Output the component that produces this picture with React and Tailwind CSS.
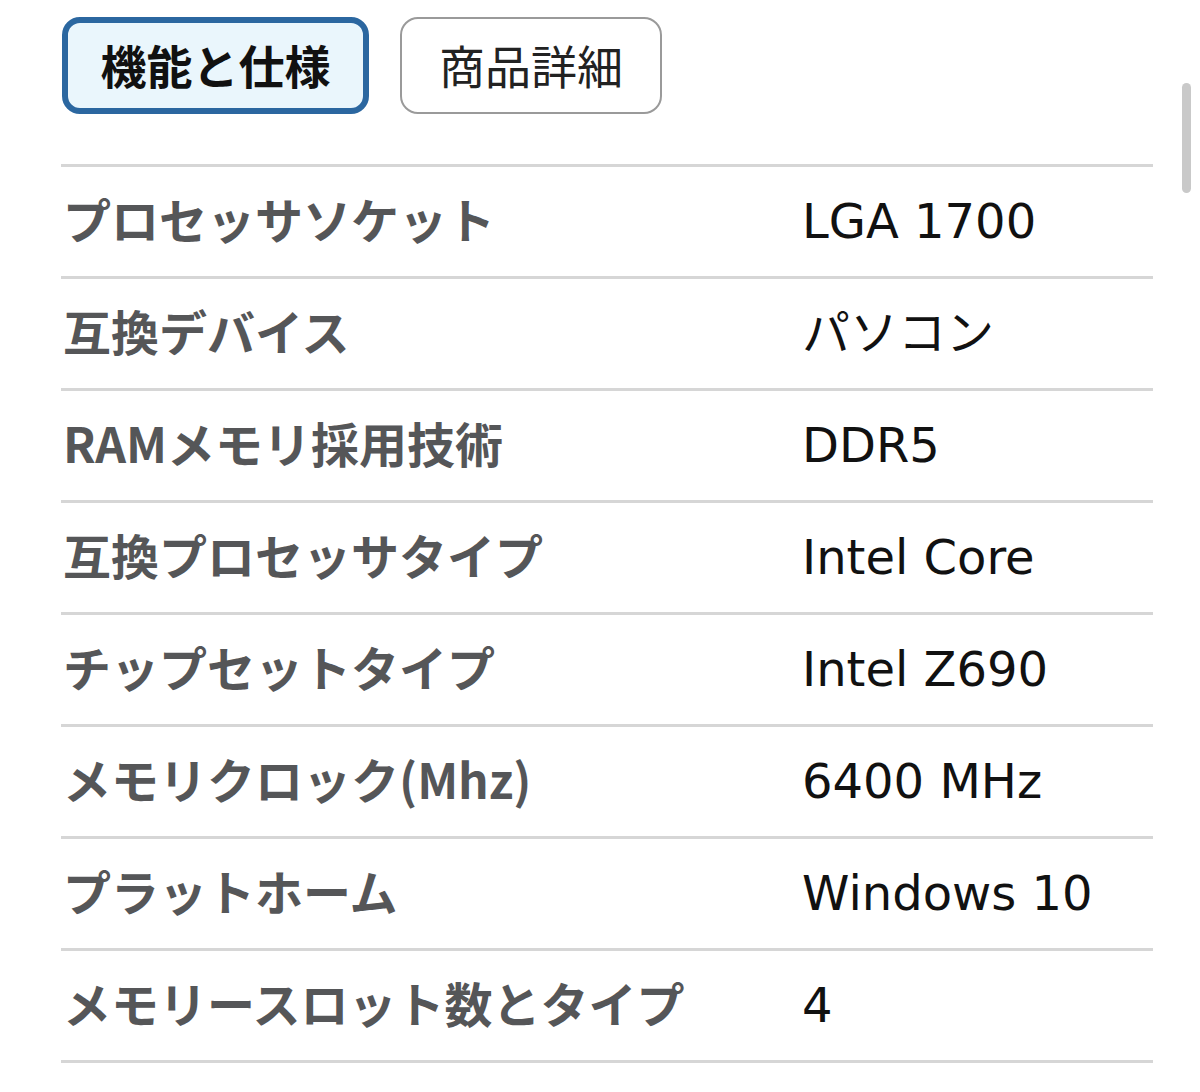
import { useState } from "react";

const specs = [
  ["プロセッサソケット", "LGA 1700"],
  ["互換デバイス", "パソコン"],
  ["RAMメモリ採用技術", "DDR5"],
  ["互換プロセッサタイプ", "Intel Core"],
  ["チップセットタイプ", "Intel Z690"],
  ["メモリクロック(Mhz)", "6400 MHz"],
  ["プラットホーム", "Windows 10"],
  ["メモリースロット数とタイプ", "4"],
];

const App = () => {
  const [tab, setTab] = useState("spec");

  return (
    <div className="relative w-[1200px] h-[1092px] bg-white overflow-hidden font-['Noto_Sans_CJK_JP',sans-serif]">
      {/* fake scrollbar */}
      <div className="absolute left-[1182px] top-[83px] w-[9px] h-[110px] rounded-full bg-[#c9c9c9]" />

      <div className="pl-[61px] pt-[17px] w-[1153px]">
        {/* Tabs */}
        <div className="flex gap-[31px] pl-[1px]">
          <button
            onClick={() => setTab("spec")}
            className={
              tab === "spec"
                ? "h-[97px] w-[307px] pb-[3px] rounded-[18px] border-[6px] border-[#2b67a0] bg-[#eaf6fc] text-[46px] font-bold text-[#111] leading-none"
                : "h-[97px] w-[307px] pb-[3px] rounded-[18px] border-2 border-[#9a9a9a] bg-white text-[46px] text-[#222] leading-none"
            }
          >
            機能と仕様
          </button>
          <button
            onClick={() => setTab("detail")}
            className={
              tab === "detail"
                ? "h-[97px] w-[262px] pb-[3px] rounded-[18px] border-[6px] border-[#2b67a0] bg-[#eaf6fc] text-[46px] font-bold text-[#111] leading-none"
                : "h-[97px] w-[262px] pb-[3px] rounded-[18px] border-2 border-[#9a9a9a] bg-white text-[46px] text-[#222] leading-none"
            }
          >
            商品詳細
          </button>
        </div>

        {/* Spec table */}
        <div className="mt-[50px] border-t-[3px] border-[#d6d6d6]">
          {specs.map(([label, value]) => (
            <div key={label} className="flex items-center h-[112px] border-b-[3px] border-[#d6d6d6]">
              <div className="w-[741px] pl-[2px] pb-[8px] text-[48px] font-bold text-[#555658] leading-none">
                {label}
              </div>
              <div className="pb-[2px] text-[48px] text-[#111] leading-none font-['DejaVu_Sans','Noto_Sans_CJK_JP',sans-serif]">
                {value}
              </div>
            </div>
          ))}
        </div>
      </div>
    </div>
  );
};

export default App;
